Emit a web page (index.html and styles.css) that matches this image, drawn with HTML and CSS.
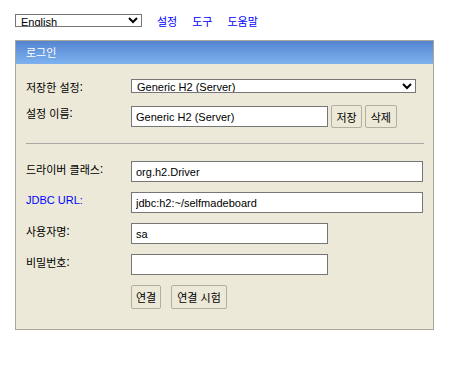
FILE: index.html
```html
<!DOCTYPE html>
<html lang="ko">
<head>
    <meta charset="UTF-8">
    <meta name="viewport" content="width=device-width, initial-scale=1.0">
    <title>H2 Console</title>
    <link rel="stylesheet" href="styles.css">
</head>
<body>

    <div class="top-bar">
        <select class="lang-select">
            <option>English</option>
        </select>
        <a href="#" class="top-link">설정</a>
        <a href="#" class="top-link">도구</a>
        <a href="#" class="top-link">도움말</a>
    </div>

    <div class="login">
        <div class="login-header">로그인</div>
        <div class="login-body">
            <div class="row row-first">
                <span class="label">저장한 설정:</span>
                <select class="setting-select">
                    <option>Generic H2 (Server)</option>
                </select>
            </div>
            <div class="row row-tall">
                <span class="label">설정 이름:</span>
                <input type="text" class="field short" value="Generic H2 (Server)">
                <button class="btn">저장</button>
                <button class="btn">삭제</button>
            </div>

            <div class="divider"></div>

            <div class="row row-after-divider">
                <span class="label">드라이버 클래스:</span>
                <input type="text" class="field wide" value="org.h2.Driver">
            </div>
            <div class="row">
                <a href="#" class="label label-link">JDBC URL:</a>
                <input type="text" class="field wide" value="jdbc:h2:~/selfmadeboard">
            </div>
            <div class="row">
                <span class="label">사용자명:</span>
                <input type="text" class="field short" value="sa">
            </div>
            <div class="row">
                <span class="label">비밀번호:</span>
                <input type="password" class="field short" value="">
            </div>
            <div class="row">
                <span class="label"></span>
                <button class="btn btn-tall">연결</button>
                <button class="btn btn-tall btn-test">연결 시험</button>
            </div>
        </div>
    </div>

</body>
</html>
```

FILE: styles.css
```css
body {
    margin: 0;
    padding: 14px 15px;
    font-family: "Liberation Sans", "Noto Sans CJK KR", sans-serif;
    font-size: 11px;
    color: #000;
}
.top-bar {
    display: flex;
    align-items: center;
    height: 13px;
}
.lang-select {
    width: 127px;
    height: 13px;
    box-sizing: border-box;
    border: 1px solid #767676;
    border-radius: 0;
    padding: 0 0 0 1px;
    line-height: 11px;
    font-family: "Liberation Sans", sans-serif;
    font-size: 11px;
    background: #fff;
    color: #000;
}
.top-link {
    color: #0000ff;
    text-decoration: none;
    margin-left: 15px;
    font-family: "Noto Sans CJK KR", sans-serif;
    font-size: 11px;
}
.login {
    margin-top: 13px;
    width: 419px;
    box-sizing: border-box;
    border: 1px solid #aca899;
    background: #ece9d8;
}
.login-header {
    height: 23px;
    line-height: 23px;
    padding-left: 10px;
    color: #fff;
    font-family: "Noto Sans CJK KR", sans-serif;
    font-size: 11px;
    background: linear-gradient(#5584d0, #7db2ef);
}
.login-body {
    padding: 15px 9px 20px 10px;
}
.row {
    display: flex;
    align-items: flex-start;
    margin-top: 10px;
}
.row-first {
    margin-top: 0;
}
.row-tall {
    align-items: center;
}
.row-tall .label {
    align-self: flex-start;
}
.row-after-divider {
    margin-top: 17px;
}
.label {
    width: 105px;
    flex-shrink: 0;
    line-height: 16px;
    font-family: "Noto Sans CJK KR", sans-serif;
    font-size: 11px;
    color: #000;
    text-decoration: none;
}
.label-link {
    color: #0000ff;
    font-family: "Liberation Sans", sans-serif;
}
.setting-select {
    width: 285px;
    height: 14px;
    box-sizing: border-box;
    border: 1px solid #767676;
    border-radius: 0;
    padding: 0 0 0 1px;
    line-height: 12px;
    font-family: "Liberation Sans", sans-serif;
    font-size: 11px;
    background: #fff;
    color: #000;
}
.field {
    height: 21px;
    box-sizing: border-box;
    border: 1px solid #767676;
    margin: 0;
    padding: 0 4px;
    font-family: "Liberation Sans", sans-serif;
    font-size: 11px;
    background: #fff;
    color: #000;
}
.field.short {
    width: 197px;
}
.field.wide {
    width: 292px;
}
.btn {
    height: 23px;
    margin: 0 0 0 3px;
    padding: 0 4.5px;
    box-sizing: border-box;
    border: 1px solid #b2afa1;
    border-radius: 2px;
    background: #ece9d8;
    color: #000;
    font-family: "Noto Sans CJK KR", sans-serif;
    font-size: 11px;
}
.btn-tall {
    height: 24px;
    margin-left: 0;
    padding: 0 4px;
}
.btn-test {
    margin-left: 10px;
    padding: 0 5px;
}
.divider {
    margin-top: 15px;
    height: 1px;
    background: #a8a8a8;
}
```
